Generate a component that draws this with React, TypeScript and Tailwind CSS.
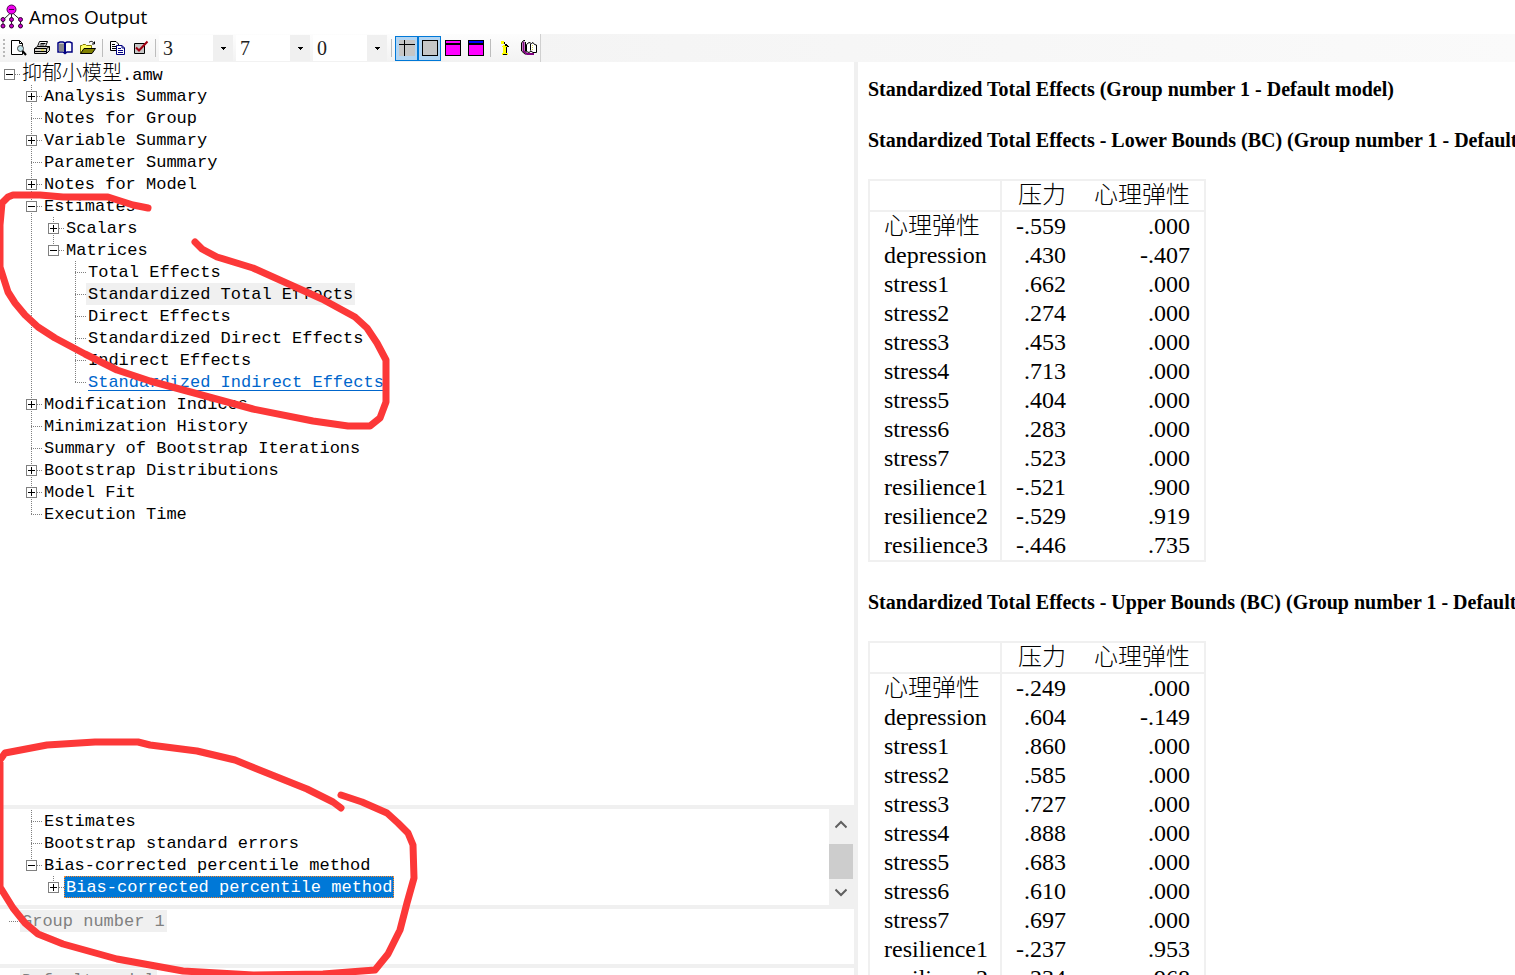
import { useState } from "react";
import type { ReactNode } from "react";

type TreeRow = {
  // one character per 22px column: " " blank, "|" line, "t" branch, "l" last branch, "+" closed, "-" open
  guides: string;
  last?: boolean;
  first?: boolean;
  label: string;
  look?: "plain" | "muted" | "disabled" | "link" | "selected";
};

const outputTree: TreeRow[] = [
  { guides: " +", label: "Analysis Summary" },
  { guides: " t", label: "Notes for Group" },
  { guides: " +", label: "Variable Summary" },
  { guides: " t", label: "Parameter Summary" },
  { guides: " +", label: "Notes for Model" },
  { guides: " -", label: "Estimates" },
  { guides: " |+", label: "Scalars" },
  { guides: " |-", label: "Matrices", last: true },
  { guides: " | t", label: "Total Effects" },
  { guides: " | t", label: "Standardized Total Effects", look: "muted" },
  { guides: " | t", label: "Direct Effects" },
  { guides: " | t", label: "Standardized Direct Effects" },
  { guides: " | t", label: "Indirect Effects" },
  { guides: " | l", label: "Standardized Indirect Effects", look: "link" },
  { guides: " +", label: "Modification Indices" },
  { guides: " t", label: "Minimization History" },
  { guides: " t", label: "Summary of Bootstrap Iterations" },
  { guides: " +", label: "Bootstrap Distributions" },
  { guides: " +", label: "Model Fit" },
  { guides: " l", label: "Execution Time" },
];

const estimateTree: TreeRow[] = [
  { guides: " t", label: "Estimates" },
  { guides: " t", label: "Bootstrap standard errors" },
  { guides: " -", label: "Bias-corrected percentile method", last: true },
  { guides: "  +", label: "Bias-corrected percentile method", last: true, look: "selected" },
];

const lowerBounds = [
  ["心理弹性", "-.559", ".000"],
  ["depression", ".430", "-.407"],
  ["stress1", ".662", ".000"],
  ["stress2", ".274", ".000"],
  ["stress3", ".453", ".000"],
  ["stress4", ".713", ".000"],
  ["stress5", ".404", ".000"],
  ["stress6", ".283", ".000"],
  ["stress7", ".523", ".000"],
  ["resilience1", "-.521", ".900"],
  ["resilience2", "-.529", ".919"],
  ["resilience3", "-.446", ".735"],
];

const upperBounds = [
  ["心理弹性", "-.249", ".000"],
  ["depression", ".604", "-.149"],
  ["stress1", ".860", ".000"],
  ["stress2", ".585", ".000"],
  ["stress3", ".727", ".000"],
  ["stress4", ".888", ".000"],
  ["stress5", ".683", ".000"],
  ["stress6", ".610", ".000"],
  ["stress7", ".697", ".000"],
  ["resilience1", "-.237", ".953"],
  ["resilience2", "-.234", ".968"],
];

const labelLooks = {
  plain: "text-black",
  muted: "bg-[#f0f0f0] text-black",
  disabled: "bg-[#f0f0f0] text-[#808080]",
  link: "text-[#0066cc] underline underline-offset-3",
  selected: "bg-[#0078d7] text-white outline-1 -outline-offset-1 outline-dotted outline-[#ff8728]",
};

const Guide = ({ kind, top, bottom }: { kind: string; top: boolean; bottom: boolean }) => {
  const box = kind === "+" || kind === "-";
  const svg = (
    <svg width="22" height="22" viewBox="0 0 22 22" fill="none" shapeRendering="crispEdges" stroke="#808080">
      {kind !== " " && top && <path d="M9.5 0V11" strokeDasharray="1 1" />}
      {kind !== " " && bottom && <path d="M9.5 12V22" strokeDasharray="1 1" />}
      {kind !== " " && kind !== "|" && <path d="M9 11.5H20" strokeDasharray="1 1" />}
      {box && <rect x="4.5" y="6.5" width="10" height="10" fill="#fff" />}
      {box && <path d={kind === "+" ? "M6 11.5H13M9.5 8V15" : "M6 11.5H13"} stroke="#000" />}
    </svg>
  );
  if (!box) return <span className="shrink-0">{svg}</span>;
  return <button type="button" aria-label={kind === "+" ? "Expand" : "Collapse"} className="shrink-0">{svg}</button>;
};

const TreeItem = ({ guides, last, first, label, look = "plain" }: TreeRow) => (
  <li className="flex h-[22px] items-center whitespace-pre">
    {guides.split("").map((kind, i) => (
      <Guide key={i} kind={kind} top={!first} bottom={!(kind === "l" || (last && i === guides.length - 1))} />
    ))}
    <button type="button" className={`-ml-0.5 h-[22px] px-0.5 pt-0.5 text-left leading-5 ${labelLooks[look]}`}>{label}</button>
  </li>
);

const ToolButton = ({ label, active, children }: { label: string; active?: boolean; children: ReactNode }) => (
  <button
    type="button"
    title={label}
    aria-label={label}
    className={`flex h-[25px] w-[23px] shrink-0 items-center justify-center ${active ? "border border-[#0078d7] bg-[#b3d5f2]" : ""}`}
  >
    <svg width="16" height="16" viewBox="0 0 16 16" fill="none" className="shrink-0">{children}</svg>
  </button>
);

const Separator = () => <span className="mx-[3px] h-[18px] w-px shrink-0 bg-[#bdbdbd]" />;

const Combo = ({ label, value, options }: { label: string; value: string; options: string[] }) => {
  const [current, setCurrent] = useState(value);
  return (
    <div className="relative h-[26px] w-[74px] shrink-0 bg-white">
      <select
        aria-label={label}
        value={current}
        onChange={(e) => setCurrent(e.target.value)}
        className="h-full w-full appearance-none bg-transparent pl-1 font-['Liberation_Serif',serif] text-[20px] leading-[26px] text-[#222]"
      >
        {options.map((o) => <option key={o}>{o}</option>)}
      </select>
      <span className="pointer-events-none absolute inset-y-0 right-0 flex w-5 items-center justify-center bg-[#f0f0f0]">
        <svg width="5" height="3" viewBox="0 0 5 3" shapeRendering="crispEdges"><path d="M0 0h5v1H0zM1 1h3v1H1zM2 2h1v1H2z" /></svg>
      </span>
    </div>
  );
};

const digits = ["0", "1", "2", "3", "4", "5", "6", "7", "8", "9"];

const Toolbar = () => (
  <div className="flex h-7 shrink-0 bg-linear-to-r from-[#f1f1f1] to-[#fafafa]">
    <div className="flex items-center border-r border-[#d0d0d0] bg-linear-to-b from-[#fdfdfd] to-[#f2f2f2] pl-0.5">
      <svg width="5" height="20" viewBox="0 0 5 20" className="shrink-0"><path d="M2 1V20" stroke="#b8b8b8" strokeWidth="2" strokeDasharray="2 2" /></svg>
      <ToolButton label="Print preview">
        <path d="M.5 .5H8.5L11.5 3.5V14.5H.5Z" fill="#fff" stroke="#000" />
        <path d="M8.500 .5V3.500H11.500" stroke="#000" />
        <circle cx="9.500" cy="8.500" r="3" fill="#bfe3ea" stroke="#444" />
        <path d="M11.500 11L15 15" stroke="#000" strokeWidth="2" />
      </ToolButton>
      <ToolButton label="Print">
        <path d="M5.500 1.500H13.500L11.500 6.500H3.500Z" fill="#fff" stroke="#000" />
        <path d="M6.500 3.500H11.500M5.500 5H10.500" stroke="#000" />
        <path d="M.5 8.500L3.500 6.500H15.500V10.500L12.500 13.500H.5Z" fill="#d4d0c8" stroke="#000" />
        <path d="M.5 8.500H12.500V13.500M12.500 8.500L15.500 6.500M1 11.500H12" stroke="#000" />
        <path d="M7 10H10" stroke="#e6df00" />
      </ToolButton>
      <ToolButton label="Contents">
        <path d="M1 3L3 2H6L8 3L10 2H13L15 3V12H10L8 13.500L6 12H1Z" fill="#fff" stroke="#000080" strokeWidth="1.500" />
        <path d="M2 3.500H7V11.500H2Z" fill="#8a8a8a" />
        <path d="M8 3V13" stroke="#000080" strokeWidth="2" />
      </ToolButton>
      <ToolButton label="Open">
        <path d="M.5 13.500V5.500H2L3 4.500H5.500L6.500 5.500H11.500V8" fill="#ffff66" stroke="#807800" />
        <path d="M.5 13.500L4 8.500H15.500L12 13.500Z" fill="#808000" stroke="#000" />
        <path d="M9 2.500C10.500 .8 13 1 14 3.500M14.500 1.500V4H12" stroke="#000" />
      </ToolButton>
      <Separator />
      <ToolButton label="Copy">
        <path d="M.5 1.500H6L8.500 4V10.500H.5Z" fill="#fff" stroke="#000" />
        <path d="M2 4.500H5M2 6.500H7M2 8.500H7" stroke="#000" />
        <path d="M6.500 5.500H12L14.500 8V14.500H6.500Z" fill="#fff" stroke="#000080" />
        <path d="M12 5.500V8H14.500M8 8.500H11M8 10.500H13M8 12.500H13" stroke="#000080" />
      </ToolButton>
      <ToolButton label="Options">
        <path d="M1.500 3.500H11.500V13.500H1.500Z" fill="#c6c6c6" stroke="#000" />
        <path d="M3 7.500L6 10.500L14.500 1.500" stroke="#a00010" strokeWidth="2" />
      </ToolButton>
      <Separator />
      <div className="mr-px flex gap-[3px]">
        <Combo label="Width" value="3" options={digits} />
        <Combo label="Digits" value="7" options={digits} />
        <Combo label="Decimals" value="0" options={digits} />
      </div>
      <Separator />
      <ToolButton label="Table rules" active>
        <path d="M0 0H16V16H0Z" fill="#c6c6c6" />
        <path d="M0 4.500H16M5.500 0V16" stroke="#000" shapeRendering="crispEdges" />
      </ToolButton>
      <ToolButton label="Table border" active>
        <path d="M.5 .5H15.500V15.500H.5Z" fill="#c6c6c6" stroke="#000" shapeRendering="crispEdges" />
      </ToolButton>
      <ToolButton label="Show header">
        <path d="M.5 .5H15.500V15.500H.5Z" fill="#f0f" stroke="#000" shapeRendering="crispEdges" />
        <path d="M0 4H16" stroke="#000" strokeWidth="2" shapeRendering="crispEdges" />
      </ToolButton>
      <ToolButton label="Show title">
        <path d="M.5 .5H15.500V15.500H.5Z" fill="#f0f" stroke="#000" shapeRendering="crispEdges" />
        <path d="M1 1H15V3H1Z" fill="#00f" />
        <path d="M0 4H16" stroke="#000" strokeWidth="2" shapeRendering="crispEdges" />
      </ToolButton>
      <Separator />
      <ToolButton label="Hints">
        <g shapeRendering="crispEdges">
          <path d="M3 1H6V4H3ZM5 5H9V13H10V15H4V13H5V7H4V6H5Z" fill="#ff0" />
          <path d="M6 2H7V4H6ZM7 4H9V5H10V6H11V7H9V13H8V7H9V6H7ZM5 14H9V15H5Z" fill="#000" />
        </g>
      </ToolButton>
      <ToolButton label="Help book">
        <path d="M2.500 1.500V11L6 14H13" stroke="#800080" strokeWidth="2" />
        <path d="M.5 3L2.500 .5H4M.5 3V11L4.500 14.500" stroke="#000" />
        <path d="M4.500 2V11.500" stroke="#000" />
        <path d="M5.500 11.500V4.500L8 2.500L10.500 3.500L12 2.500L13.500 4.500L15.500 5V12.500H12L10 11L8 12.500Z" fill="#fff" stroke="#000" />
        <path d="M9.500 4V10.500" stroke="#000" />
        <path d="M11.500 5V10" stroke="#e0dc40" strokeDasharray="1 1" />
      </ToolButton>
    </div>
  </div>
);

const AmosIcon = () => (
  <svg width="24" height="26" viewBox="0 0 24 26" className="shrink-0">
    <path d="M11.500 8L3 16M11.500 8V24M11.500 8L20.500 16M3 16V24M20.500 16V24" stroke="#222" />
    <circle cx="11.500" cy="5.500" r="4.500" fill="#f000f0" stroke="#500050" />
    <path d="M9 5.500H14" stroke="#400040" />
    {[3, 11.5, 20.5].map((x) => (
      <g key={x} fill="#c800c8" stroke="#300030">
        <circle cx={x} cy="15.500" r="2" />
        <circle cx={x} cy="22" r="2" />
      </g>
    ))}
  </svg>
);

const EffectsTable = ({ rows }: { rows: string[][] }) => (
  <table className="border-2 border-[#f0f0f0] text-[24px] leading-[29px] whitespace-nowrap">
    <thead>
      <tr className="border-b-2 border-[#f0f0f0]">
        <td className="border-r-2 border-[#f0f0f0] p-0"></td>
        <th scope="col" className="px-3.5 py-0 text-right font-light">压力</th>
        <th scope="col" className="px-3.5 py-0 text-right font-light">心理弹性</th>
      </tr>
    </thead>
    <tbody>
      {rows.map((row) => (
        <tr key={row[0]}>
          <th scope="row" className="border-r-2 border-[#f0f0f0] py-0 pr-3 pl-3.5 text-left font-light">{row[0]}</th>
          <td className="px-3.5 py-0 text-right">{row[1]}</td>
          <td className="px-3.5 py-0 text-right">{row[2]}</td>
        </tr>
      ))}
    </tbody>
  </table>
);

const Scrollbar = () => (
  <div className="flex w-[25px] shrink-0 flex-col bg-[#f0f0f0] pr-px">
    <button type="button" aria-label="Scroll up" className="flex h-[30px] items-center justify-center">
      <svg width="12" height="9" viewBox="0 0 12 9" fill="none" stroke="#606060" strokeWidth="2"><path d="M.5 7.500L6 2L11.500 7.500" /></svg>
    </button>
    <div className="mt-[5px] h-[35px] bg-[#cdcdcd]" />
    <button type="button" aria-label="Scroll down" className="flex h-[26px] items-center justify-center">
      <svg width="12" height="9" viewBox="0 0 12 9" fill="none" stroke="#606060" strokeWidth="2"><path d="M.5 1.500L6 7L11.500 1.500" /></svg>
    </button>
  </div>
);

// red pen marks drawn by hand over the two trees
const PenMarks = () => (
  <svg width="430" height="975" viewBox="0 0 430 975" fill="none" stroke="#fc3838" strokeWidth="7" strokeLinecap="round" strokeLinejoin="round" className="pointer-events-none absolute top-0 left-0">
    <path d="M148 208L133 205L108 197H63L40 195H13L8 197L2 203L0 225V267L8 292L15 303L25 315L38 327L55 338L85 354L117 370L150 381L187 391L253 409L313 421L348 426H370L380 418L386 402L386 360L377 343L367 328L355 317L322 299L253 268L217 257L202 249L195 242" />
    <path d="M341 808L333 802L307 789L257 769L235 760L197 751L150 745L138 742H95L47 745L5 753L0 760V887L13 908L25 923L38 934L63 944L117 959L183 971L253 975L323 974L375 970L388 954L400 930L407 903L414 878L413 845L408 833L398 823L387 813L362 802L341 795" />
  </svg>
);

const App = () => {
  return (
    <div className="relative flex h-screen flex-col overflow-hidden bg-white font-['Liberation_Serif','Noto_Sans_CJK_SC',serif] text-black">
      <header className="flex h-[34px] shrink-0 items-center gap-[5px]">
        <AmosIcon />
        <h1 className="font-['Open_Sans',sans-serif] text-[19px] leading-8">Amos Output</h1>
      </header>
      <Toolbar />

      <main className="grid min-h-0 flex-1 grid-cols-[minmax(0,858fr)_minmax(0,657fr)]">
        <div className="flex min-h-0 flex-col border-r-4 border-[#f0f0f0] font-['Liberation_Mono','Noto_Sans_CJK_SC',monospace] text-[17px] leading-[22px]">
          <ul className="min-h-0 flex-1 overflow-hidden pt-px">
            <li className="flex h-[22px] items-center whitespace-pre">
              <Guide kind="-" top={false} bottom={false} />
              <button type="button" className="h-[22px] pt-0.5 leading-5"><span className="text-[20px] font-light">抑郁小模型</span>.amw</button>
            </li>
            {outputTree.map((row) => <TreeItem key={row.label} {...row} />)}
          </ul>
          <div className="flex h-[100px] shrink-0 border-t-4 border-[#f0f0f0]">
            <ul className="min-w-0 flex-1 overflow-hidden pt-px">
              {estimateTree.map((row, i) => <TreeItem key={i} {...row} />)}
            </ul>
            <Scrollbar />
          </div>
          <ul className="h-[59px] shrink-0 overflow-hidden border-t-4 border-[#f0f0f0] pt-px">
            <TreeItem guides="l" first label="Group number 1" look="disabled" />
          </ul>
          <ul className="h-[11px] shrink-0 overflow-hidden border-t-4 border-[#f0f0f0] pt-px">
            <TreeItem guides="l" first label="Default model" look="disabled" />
          </ul>
        </div>

        <section className="min-h-0 overflow-hidden pt-4 pl-2.5">
          <h2 className="text-[20px] leading-[22px] font-bold whitespace-nowrap">Standardized Total Effects (Group number 1 - Default model)</h2>
          <h3 className="mt-[29px] mb-7 text-[20px] leading-[22px] font-bold whitespace-nowrap">Standardized Total Effects - Lower Bounds (BC) (Group number 1 - Default model)</h3>
          <EffectsTable rows={lowerBounds} />
          <h3 className="mt-[29px] mb-7 text-[20px] leading-[22px] font-bold whitespace-nowrap">Standardized Total Effects - Upper Bounds (BC) (Group number 1 - Default model)</h3>
          <EffectsTable rows={upperBounds} />
        </section>
      </main>
      <PenMarks />
    </div>
  );
};

export default App;
